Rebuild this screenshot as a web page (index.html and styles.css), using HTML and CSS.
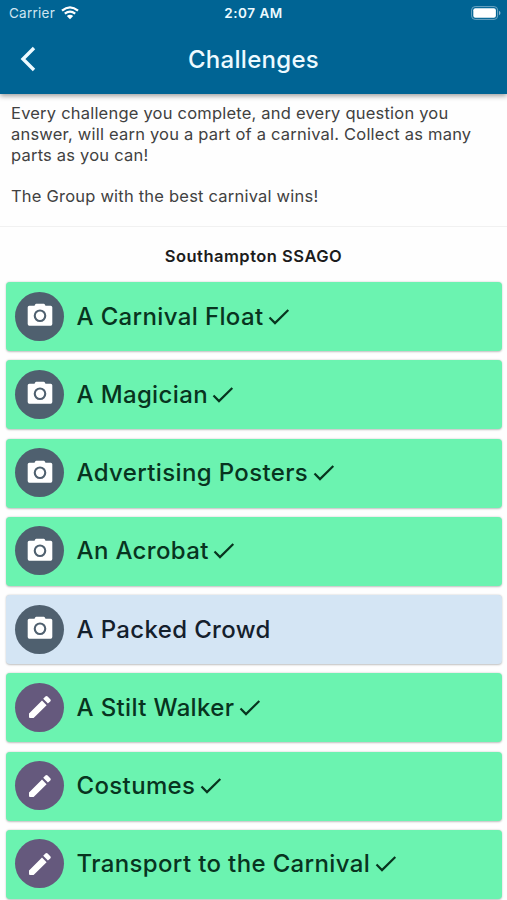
FILE: index.html
```html
<!DOCTYPE html>
<html lang="en">
<head>
<meta charset="utf-8">
<title>Challenges</title>
<link rel="stylesheet" href="styles.css">
</head>
<body>
<svg class="defs" aria-hidden="true">
  <symbol id="camera" viewBox="0 0 26 24"><path fill-rule="evenodd" d="M2.3 2.7h5.2l.8-1.4Q8.6.8 9.2.8h7.6q.6 0 .9.5l.8 1.4h5.2q1.6 0 1.6 1.6v16.8q0 1.6-1.6 1.6H2.3Q.7 22.700.7 21.100V4.300Q.7 2.700 2.300 2.700zM13 6.400a6.300 6.300 0 1 0 0 12.600a6.300 6.300 0 1 0 0-12.600z"/><circle cx="13" cy="12.700" r="4.200"/></symbol>
  <symbol id="pencil" viewBox="0 0 24 24"><path d="M1 18.400V22q0 1 1 1h3.600L18.600 10.200 14 5.500zM22.300 6.500q1.100-1.100 0-2.200l-2.700-2.700q-1.100-1.100-2.200 0l-2.200 2.200 4.700 4.700z"/></symbol>
  <symbol id="check" viewBox="0 0 22 18"><path d="M1.500 9.500 7 15.100 20.300 2" fill="none" stroke="currentColor" stroke-width="2.2"/></symbol>
</svg>
<header class="appbar">
  <div class="status">
    <span class="carrier">Carrier
      <svg class="wifi" viewBox="0 0 18 14"><path d="M1 4.700Q9-2.100 17 4.700M3.800 7.700Q9 3.500 14.200 7.700" fill="none" stroke="currentColor" stroke-width="2.200"/><path d="M5.800 10Q9 7.400 12.200 10L9 13.300z" fill="currentColor"/></svg>
    </span>
    <span class="time">2:07 AM</span>
    <svg class="battery" viewBox="0 0 30 14"><rect x=".6" y=".6" width="26" height="12.800" rx="3.500" fill="none" stroke="#6ea6c3"/><rect x="2.300" y="2.300" width="22.600" height="9.400" rx="2" fill="#fff"/><path d="M28 4.700q1.500.8 1.500 2.300T28 9.300z" fill="#8bb7cf"/></svg>
  </div>
  <div class="titlebar">
    <svg class="back" viewBox="0 0 16 26"><path d="M14 2 3 13l11 11" fill="none" stroke="currentColor" stroke-width="3.4"/></svg>
    <h1>Challenges</h1>
    <span></span>
  </div>
</header>
<section class="intro">
  <p>Every challenge you complete, and every question you<br>answer, will earn you a part of a carnival. Collect as many<br>parts as you can!</p>
  <p>The Group with the best carnival wins!</p>
</section>
<main>
  <h2>Southampton SSAGO</h2>
  <ul class="list">
    <li class="card"><span class="avatar"><svg class="cam"><use href="#camera"/></svg></span><span class="name">A Carnival Float</span><svg class="tick"><use href="#check"/></svg></li>
    <li class="card"><span class="avatar"><svg class="cam"><use href="#camera"/></svg></span><span class="name">A Magician</span><svg class="tick"><use href="#check"/></svg></li>
    <li class="card"><span class="avatar"><svg class="cam"><use href="#camera"/></svg></span><span class="name">Advertising Posters</span><svg class="tick"><use href="#check"/></svg></li>
    <li class="card"><span class="avatar"><svg class="cam"><use href="#camera"/></svg></span><span class="name">An Acrobat</span><svg class="tick"><use href="#check"/></svg></li>
    <li class="card open"><span class="avatar"><svg class="cam"><use href="#camera"/></svg></span><span class="name">A Packed Crowd</span></li>
    <li class="card"><span class="avatar write"><svg class="pen"><use href="#pencil"/></svg></span><span class="name">A Stilt Walker</span><svg class="tick"><use href="#check"/></svg></li>
    <li class="card"><span class="avatar write"><svg class="pen"><use href="#pencil"/></svg></span><span class="name">Costumes</span><svg class="tick"><use href="#check"/></svg></li>
    <li class="card"><span class="avatar write"><svg class="pen"><use href="#pencil"/></svg></span><span class="name">Transport to the Carnival</span><svg class="tick"><use href="#check"/></svg></li>
  </ul>
</main>
</body>
</html>
```
FILE: styles.css
```css
* { box-sizing: border-box; margin: 0; padding: 0; }
body { height: 900px; overflow: hidden; background: #fefefe; font-family: Inter, "Liberation Sans", sans-serif; color: #414141; }
.defs { display: none; }
.appbar { height: 94px; background: #006494; color: #edfaff; box-shadow: 0 2px 5px rgba(0, 0, 0, .38); }
.status { height: 26px; display: grid; grid-template-columns: 1fr auto 1fr; align-items: center; padding: 0 6px 0 9px; font-size: 13.5px; }
.carrier { display: flex; align-items: center; gap: 6px; letter-spacing: .25px; color: #cfe5f0; }
.wifi { width: 18px; height: 14px; color: #fff; }
.time { margin-right: 3px; font-weight: 600; font-size: 13.5px; letter-spacing: .5px; }
.battery { width: 30px; height: 14px; justify-self: end; }
.titlebar { height: 66px; display: grid; grid-template-columns: 1fr auto 1fr; align-items: center; padding: 0 20px; }
.back { width: 16px; height: 26px; }
h1 { font-size: 24px; font-weight: 450; letter-spacing: .3px; }
.intro { height: 133px; padding: 9px 11px 0; border-bottom: 1px solid #f1f1f1; font-size: 16.5px; line-height: 20.75px; letter-spacing: .21px; white-space: nowrap; }
.intro p + p { margin-top: 20.75px; }
h2 { height: 55px; padding-top: 4px; text-align: center; font-size: 16.5px; line-height: 51px; font-weight: 600; letter-spacing: .5px; color: #1c1c1c; }
.list { list-style: none; display: grid; gap: 9.25px; padding: 0 5px 0 5.5px; }
.card { height: 69px; display: flex; align-items: center; padding: 0 0 1px 9.5px; border-radius: 4px; background: #6bf3b0; color: #08341f; box-shadow: 0 .5px 2px rgba(0, 0, 0, .25); }
.open { background: #d4e5f4; color: #14202c; }
.avatar { width: 49px; height: 49px; margin-right: 12.5px; border-radius: 50%; display: grid; place-items: center; background: #4f606f; color: #fff; fill: #fff; }
.write { background: #65597d; }
.cam { width: 26px; height: 24px; margin-bottom: 2px; }
.pen { width: 24px; height: 24px; }
.name { font-size: 24px; font-weight: 450; letter-spacing: .36px; white-space: nowrap; }
.tick { width: 22px; height: 18px; margin: 1px 0 0 4.5px; }
```
